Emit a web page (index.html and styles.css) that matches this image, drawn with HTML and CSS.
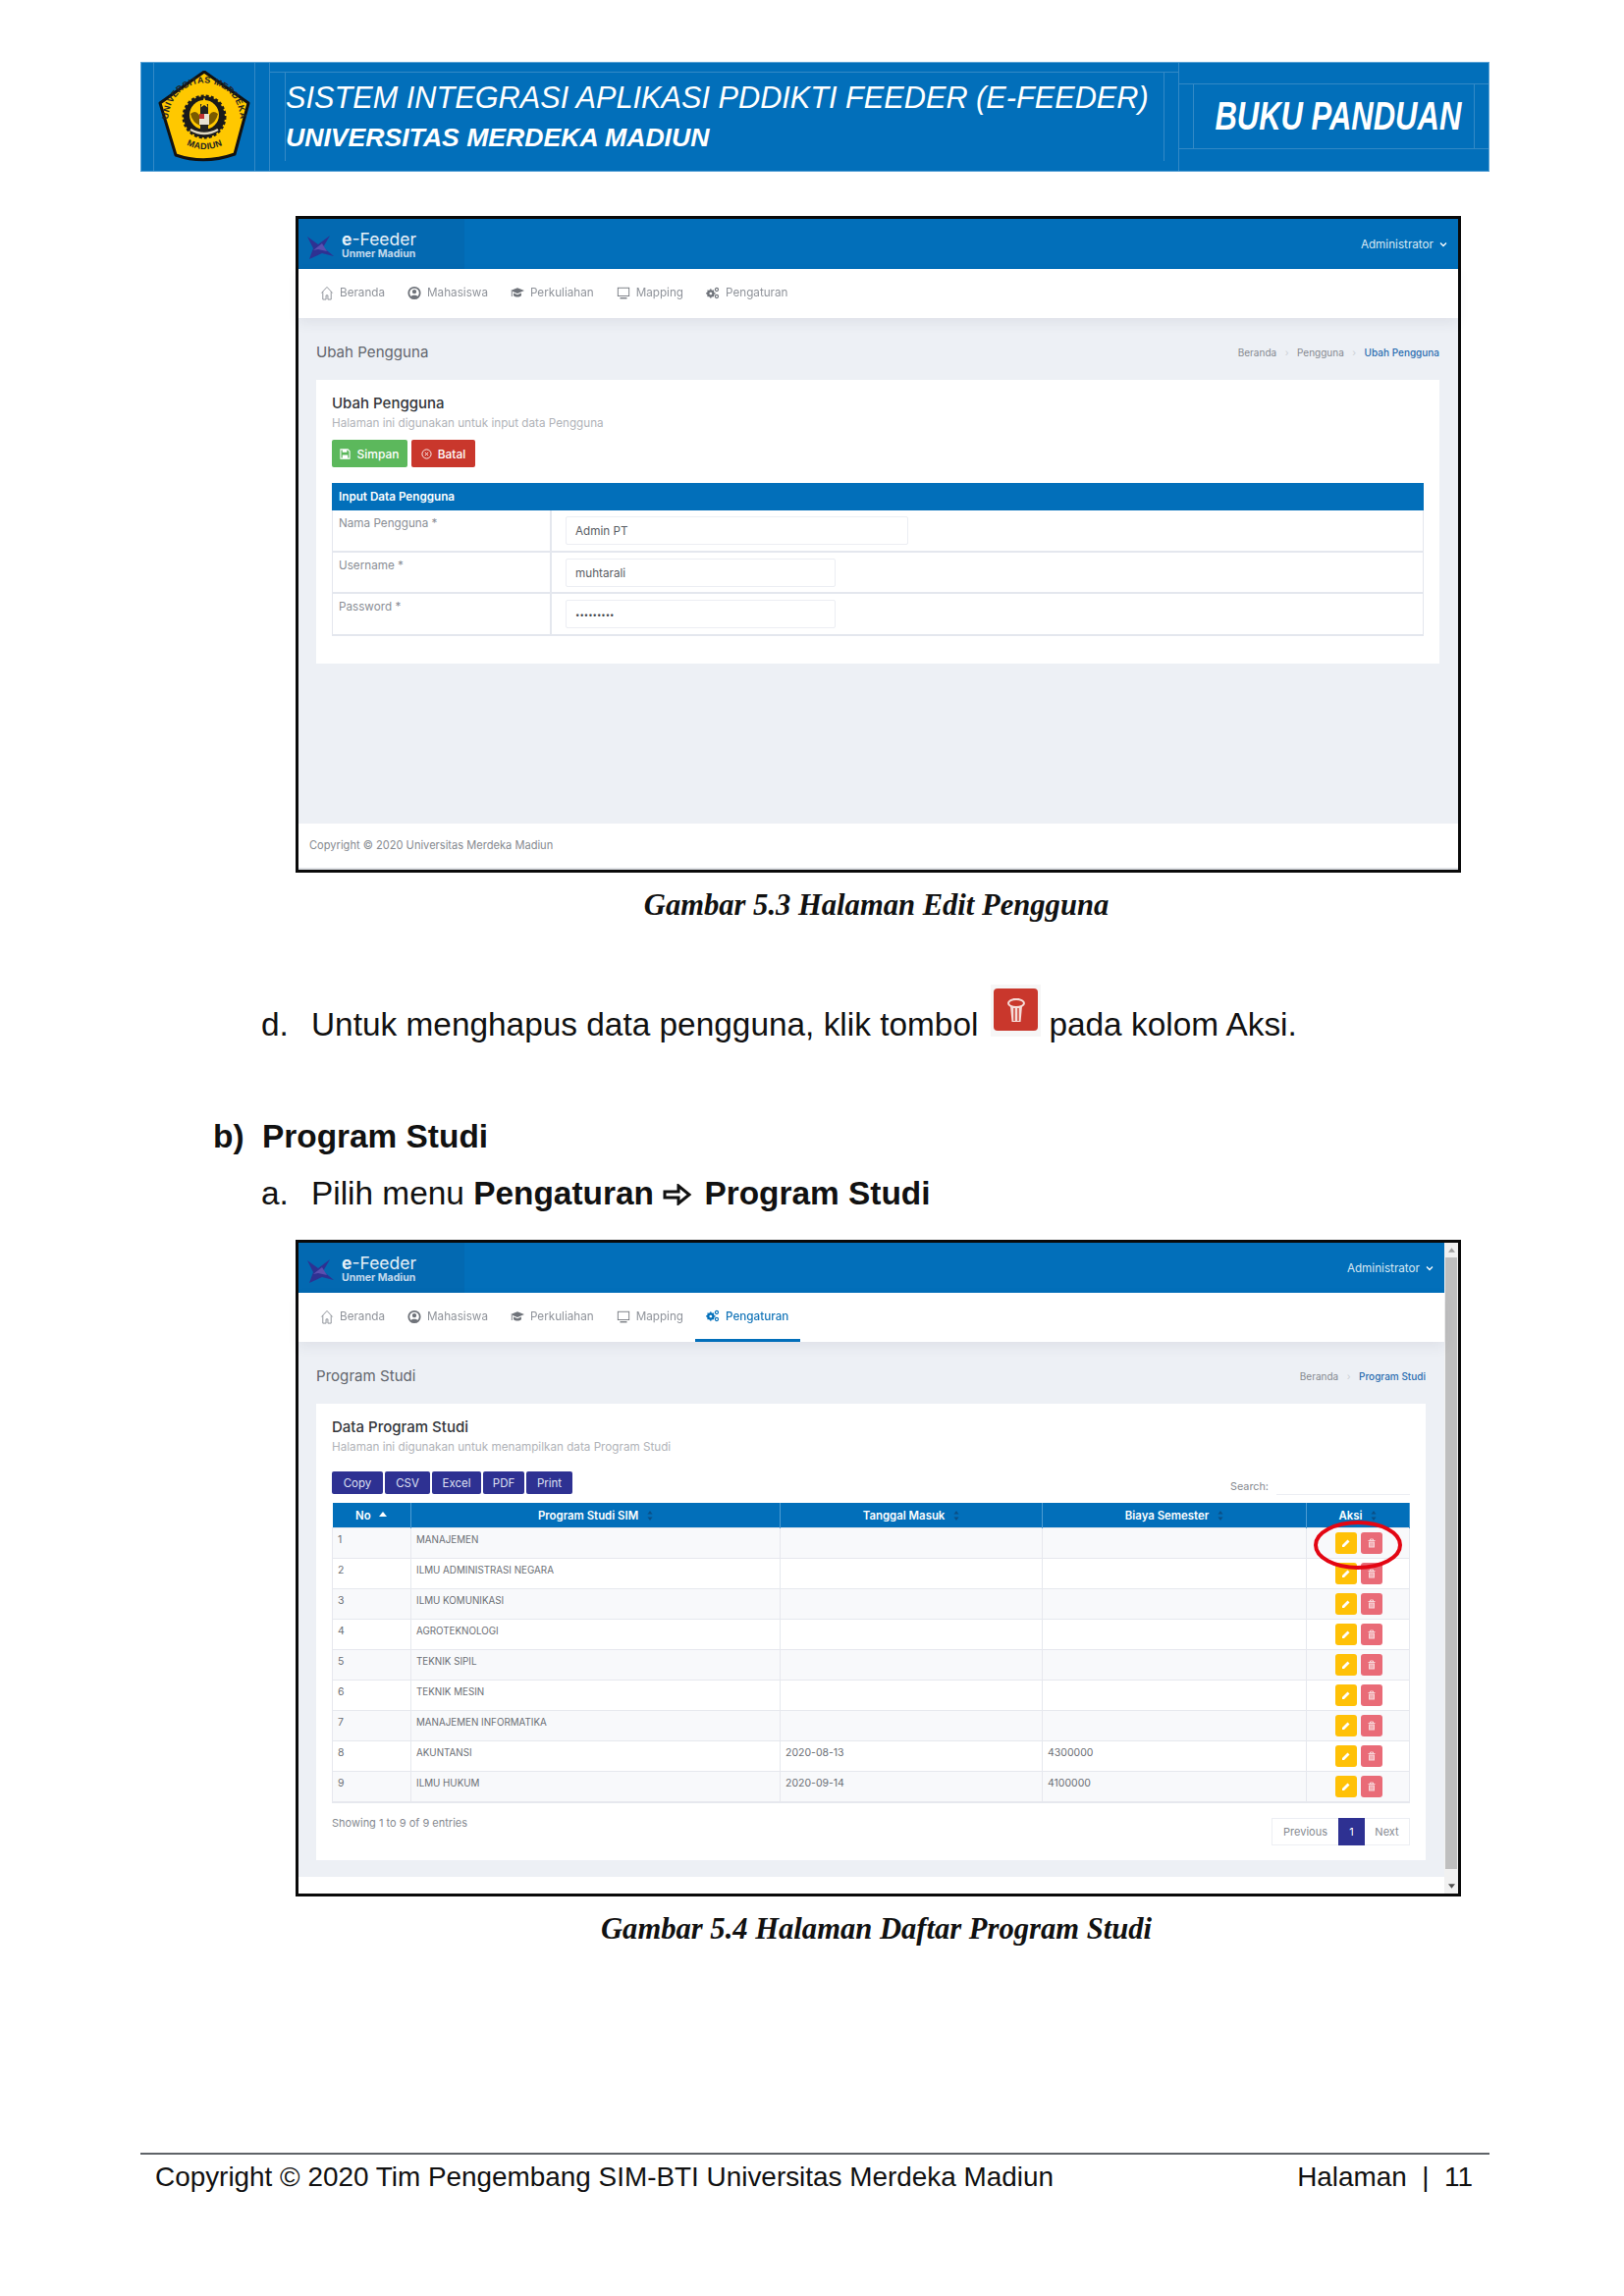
FILE: index.html
```html
<!DOCTYPE html>
<html lang="en">
<head>
    <meta charset="UTF-8">
    <meta name="viewport" content="width=device-width, initial-scale=1.0">
    <title>Buku Panduan E-Feeder</title>
    <link rel="stylesheet" href="styles.css">
</head>
<body>
    <svg class="defs" width="0" height="0">
        <symbol id="i-home" viewBox="0 0 14 16"><path d="M1 8 7 1.5 13 8M2.5 6.5V15H6v-4.5h2V15h3.500V6.500" fill="none" stroke="#8b8f96" stroke-width="1"/></symbol>
        <symbol id="i-user" viewBox="0 0 14 14"><circle cx="7" cy="7" r="5.700" fill="none" stroke="#6f737a" stroke-width="1.800"/><circle cx="7" cy="5.600" r="2.200" fill="#6f737a"/><path d="M3 11c1-2.500 7-2.500 8 0l-4 2z" fill="#6f737a"/></symbol>
        <symbol id="i-cap" viewBox="0 0 16 14"><path d="M8 1 16 4 8 7.500 0 4z" fill="#6f737a"/><path d="M3.500 7v3c2 2 7 2 9 0V7L8 9z" fill="#6f737a"/><path d="M1.500 5v6" stroke="#6f737a" stroke-width="1"/></symbol>
        <symbol id="i-screen" viewBox="0 0 16 14"><rect x="1.500" y="1" width="13" height="9.500" fill="none" stroke="#6f737a" stroke-width="1"/><path d="M4 13h8" stroke="#6f737a" stroke-width="1.500"/></symbol>
        <symbol id="i-gears" viewBox="0 0 16 15"><circle cx="5.500" cy="8" r="3.200" fill="none" stroke="currentColor" stroke-width="2.200"/><path d="M5.500 2.500v11M0 8h11M1.800 4.300l7.400 7.400M9.200 4.300l-7.400 7.400" stroke="currentColor" stroke-width="1.300"/><circle cx="5.500" cy="8" r="1.500" fill="#fff"/><circle cx="12.500" cy="3.500" r="1.800" fill="none" stroke="currentColor" stroke-width="1.300"/><circle cx="12.500" cy="11.500" r="1.800" fill="none" stroke="currentColor" stroke-width="1.300"/></symbol>
        <symbol id="i-save" viewBox="0 0 12 12"><path d="M1 1h8l2 2v8H1z" fill="none" stroke="#fff" stroke-width="1.200"/><path d="M3 1h5v3H3zM3 7h6v4H3z" fill="#fff"/></symbol>
        <symbol id="i-cancel" viewBox="0 0 12 12"><circle cx="6" cy="6" r="5" fill="none" stroke="#fff" stroke-width="1"/><path d="M4.200 4.200l3.600 3.600M7.800 4.200 4.200 7.800" stroke="#fff" stroke-width="1"/></symbol>
        <symbol id="i-pen" viewBox="0 0 10 10"><path d="M1 9V7l5.500-5.500 2 2L3 9z" fill="#fff"/></symbol>
        <symbol id="i-trash" viewBox="0 0 10 10"><path d="M1.500 2.500h7M3.500 2.500V1h3v1.500" fill="none" stroke="#f7d5d8" stroke-width="1"/><path d="M2 3.500h6V9.500H2z" fill="#f7d5d8"/><path d="M4 4.500v4M6 4.500v4" stroke="#e96b77" stroke-width=".7"/></symbol>
        <symbol id="i-bin" viewBox="0 0 20 26"><ellipse cx="10" cy="6" rx="8" ry="4" fill="none" stroke="#f6dcd8" stroke-width="2"/><path d="M7 2h6" stroke="#f6dcd8" stroke-width="2"/><path d="M4 9 5.500 25h9L16 9z" fill="#f6dcd8"/><path d="M8 11v13M12 11v13" stroke="#c9372c" stroke-width="1.400"/></symbol>
        <symbol id="i-chev" viewBox="0 0 8 6"><path d="M1 1.500 4 4.500 7 1.500" fill="none" stroke="#fff" stroke-width="1.300"/></symbol>
        <symbol id="i-sort" viewBox="0 0 6 12"><path d="M3 1 5.500 4.500H.500zM3 11 .500 7.500h5z" fill="#0a4f86"/></symbol>
        <symbol id="i-mark" viewBox="0 0 28 24"><path d="M1 1 12 9 24 0 17 12 28 21 16 18 3 24 7 13z" fill="#2e3192"/><path d="M7 15 16 8 21 16 12 14z" fill="#5a4fb0"/></symbol>
    </svg>

    <div class="page">
        <header class="doc-head">
            <div class="head-edge"></div>
            <div class="head-logo">
                <svg class="logo" viewBox="0 0 94 93">
                    <path d="M47 1 92 33 78 85Q47 96 18 86L2 33z" fill="#ffc800" stroke="#111" stroke-width="3" stroke-linejoin="round"/>
                    <path id="arc-top" d="M11 55A36.500 36.500 0 1 1 83 55" fill="none"/>
                    <path id="arc-bottom" d="M24 73Q47 87 71 73" fill="none"/>
                    <text class="logo-text"><textPath href="#arc-top" startOffset="50%" text-anchor="middle">UNIVERSITAS MERDEKA</textPath></text>
                    <text class="logo-text"><textPath href="#arc-bottom" startOffset="50%" text-anchor="middle">MADIUN</textPath></text>
                    <circle cx="47" cy="47" r="21" fill="#1a1a1a" stroke="#1a1a1a" stroke-width="3" stroke-dasharray="3 2"/>
                    <circle cx="47" cy="45" r="15" fill="#ffc800"/>
                    <path d="M33 44Q40 38 44 50L43 56Q35 53 33 44zM61 44Q54 38 50 50L51 56Q59 53 61 44z" fill="#7a5a00"/>
                    <rect x="43" y="34" width="8" height="28" fill="#222"/>
                    <rect x="42" y="44" width="10" height="11" fill="#e8e2d4"/>
                    <rect x="42" y="44" width="5" height="5" fill="#c03030"/>
                    <path d="M47 27l1.500 4h4l-3 2.500 1 4-3.500-2.500-3.500 2.500 1-4-3-2.500h4z" fill="#ffc800"/>
                    <path d="M33 60Q47 68 61 60" fill="none" stroke="#e0d8c0" stroke-width="2.500"/>
                </svg>
            </div>
            <div class="head-edge head-edge-s"></div>
            <div class="head-main">
                <div class="head-gap"></div>
                <div class="head-titles">
                    <div class="head-title">SISTEM INTEGRASI APLIKASI PDDIKTI FEEDER (E-FEEDER)</div>
                    <div class="head-sub">UNIVERSITAS MERDEKA MADIUN</div>
                </div>
            </div>
            <div class="head-tag">
                <div class="tag-box"><span class="tag-text">BUKU PANDUAN</span></div>
            </div>
        </header>

        <section class="shot">
            <div class="shot-main">
                <div class="app-bar">
                    <div class="app-brand">
                        <svg class="app-mark"><use href="#i-mark"/></svg>
                        <div class="brand-block">
                            <div class="brand-name"><b>e</b>-Feeder</div>
                            <div class="brand-sub">Unmer Madiun</div>
                        </div>
                    </div>
                    <div class="app-user">Administrator <svg class="chev"><use href="#i-chev"/></svg></div>
                </div>
                <nav class="app-nav">
                    <a class="nav-item"><svg class="nav-icon"><use href="#i-home"/></svg>Beranda</a>
                    <a class="nav-item"><svg class="nav-icon"><use href="#i-user"/></svg>Mahasiswa</a>
                    <a class="nav-item"><svg class="nav-icon"><use href="#i-cap"/></svg>Perkuliahan</a>
                    <a class="nav-item"><svg class="nav-icon"><use href="#i-screen"/></svg>Mapping</a>
                    <a class="nav-item"><svg class="nav-icon gears"><use href="#i-gears"/></svg>Pengaturan</a>
                </nav>
                <div class="app-content">
                    <div class="title-row">
                        <div class="page-title">Ubah Pengguna</div>
                        <div class="crumbs"><span>Beranda</span><i>&rsaquo;</i><span>Pengguna</span><i>&rsaquo;</i><span class="crumb-now">Ubah Pengguna</span></div>
                    </div>
                    <div class="card card-form">
                        <div class="card-title">Ubah Pengguna</div>
                        <div class="card-sub">Halaman ini digunakan untuk input data Pengguna</div>
                        <div class="form-btns">
                            <button class="btn btn-green"><svg class="btn-icon"><use href="#i-save"/></svg>Simpan</button>
                            <button class="btn btn-red"><svg class="btn-icon"><use href="#i-cancel"/></svg>Batal</button>
                        </div>
                        <div class="form-head">Input Data Pengguna</div>
                        <div class="form-row">
                            <div class="form-label">Nama Pengguna *</div>
                            <div class="form-field"><div class="fake-input input-wide">Admin PT</div></div>
                        </div>
                        <div class="form-row">
                            <div class="form-label">Username *</div>
                            <div class="form-field"><div class="fake-input">muhtarali</div></div>
                        </div>
                        <div class="form-row">
                            <div class="form-label">Password *</div>
                            <div class="form-field"><div class="fake-input pass">•••••••••</div></div>
                        </div>
                    </div>
                </div>
                <div class="app-foot">Copyright © 2020 Universitas Merdeka Madiun</div>
            </div>
        </section>

        <div class="caption">Gambar 5.3 Halaman Edit Pengguna</div>

        <div class="line line-d">
            <span class="mark">d.</span>
            <span>Untuk menghapus data pengguna, klik tombol</span>
            <span class="del-shot"><span class="del-btn"><svg class="del-icon"><use href="#i-bin"/></svg></span></span>
            <span>pada kolom Aksi.</span>
        </div>

        <div class="line line-b"><span class="mark-b">b)</span><b>Program Studi</b></div>
        <div class="line line-a">
            <span class="mark">a.</span>
            <span>Pilih menu <b>Pengaturan</b> <svg class="arrow" viewBox="0 0 30 22"><path d="M2 8h14V2l11 9-11 9v-6H2z" fill="none" stroke="#111" stroke-width="3"/></svg> <b>Program Studi</b></span>
        </div>

        <section class="shot shot-scroll">
            <div class="shot-main">
                <div class="app-bar">
                    <div class="app-brand">
                        <svg class="app-mark"><use href="#i-mark"/></svg>
                        <div class="brand-block">
                            <div class="brand-name"><b>e</b>-Feeder</div>
                            <div class="brand-sub">Unmer Madiun</div>
                        </div>
                    </div>
                    <div class="app-user">Administrator <svg class="chev"><use href="#i-chev"/></svg></div>
                </div>
                <nav class="app-nav">
                    <a class="nav-item"><svg class="nav-icon"><use href="#i-home"/></svg>Beranda</a>
                    <a class="nav-item"><svg class="nav-icon"><use href="#i-user"/></svg>Mahasiswa</a>
                    <a class="nav-item"><svg class="nav-icon"><use href="#i-cap"/></svg>Perkuliahan</a>
                    <a class="nav-item"><svg class="nav-icon"><use href="#i-screen"/></svg>Mapping</a>
                    <a class="nav-item active"><svg class="nav-icon gears"><use href="#i-gears"/></svg>Pengaturan</a>
                </nav>
                <div class="app-content">
                    <div class="title-row">
                        <div class="page-title">Program Studi</div>
                        <div class="crumbs"><span>Beranda</span><i>&rsaquo;</i><span class="crumb-now">Program Studi</span></div>
                    </div>
                    <div class="card card-list">
                        <div class="card-title">Data Program Studi</div>
                        <div class="card-sub">Halaman ini digunakan untuk menampilkan data Program Studi</div>
                        <div class="dt-tools">
                            <div class="dt-btns">
                                <button class="dt-btn w-copy">Copy</button>
                                <button class="dt-btn w-csv">CSV</button>
                                <button class="dt-btn w-excel">Excel</button>
                                <button class="dt-btn w-pdf">PDF</button>
                                <button class="dt-btn w-print">Print</button>
                            </div>
                            <div class="dt-search">Search:<span class="search-input"></span></div>
                        </div>
                        <table class="dt">
                            <colgroup>
                                <col class="c-no"><col class="c-name"><col class="c-date"><col class="c-fee"><col class="c-act">
                            </colgroup>
                            <thead>
                                <tr>
                                    <th>No <svg class="sort-up" viewBox="0 0 8 5"><path d="M4 0 8 5H0z" fill="#fff"/></svg></th>
                                    <th>Program Studi SIM <svg class="sort"><use href="#i-sort"/></svg></th>
                                    <th>Tanggal Masuk <svg class="sort"><use href="#i-sort"/></svg></th>
                                    <th>Biaya Semester <svg class="sort"><use href="#i-sort"/></svg></th>
                                    <th>Aksi <svg class="sort"><use href="#i-sort"/></svg></th>
                                </tr>
                            </thead>
                            <tbody>
                                <tr><td class="num">1</td><td>MANAJEMEN</td><td></td><td></td><td class="acts"><span class="act act-edit"><svg><use href="#i-pen"/></svg></span><span class="act act-del"><svg><use href="#i-trash"/></svg></span></td></tr>
                                <tr><td class="num">2</td><td>ILMU ADMINISTRASI NEGARA</td><td></td><td></td><td class="acts"><span class="act act-edit"><svg><use href="#i-pen"/></svg></span><span class="act act-del"><svg><use href="#i-trash"/></svg></span></td></tr>
                                <tr><td class="num">3</td><td>ILMU KOMUNIKASI</td><td></td><td></td><td class="acts"><span class="act act-edit"><svg><use href="#i-pen"/></svg></span><span class="act act-del"><svg><use href="#i-trash"/></svg></span></td></tr>
                                <tr><td class="num">4</td><td>AGROTEKNOLOGI</td><td></td><td></td><td class="acts"><span class="act act-edit"><svg><use href="#i-pen"/></svg></span><span class="act act-del"><svg><use href="#i-trash"/></svg></span></td></tr>
                                <tr><td class="num">5</td><td>TEKNIK SIPIL</td><td></td><td></td><td class="acts"><span class="act act-edit"><svg><use href="#i-pen"/></svg></span><span class="act act-del"><svg><use href="#i-trash"/></svg></span></td></tr>
                                <tr><td class="num">6</td><td>TEKNIK MESIN</td><td></td><td></td><td class="acts"><span class="act act-edit"><svg><use href="#i-pen"/></svg></span><span class="act act-del"><svg><use href="#i-trash"/></svg></span></td></tr>
                                <tr><td class="num">7</td><td>MANAJEMEN INFORMATIKA</td><td></td><td></td><td class="acts"><span class="act act-edit"><svg><use href="#i-pen"/></svg></span><span class="act act-del"><svg><use href="#i-trash"/></svg></span></td></tr>
                                <tr><td class="num">8</td><td>AKUNTANSI</td><td class="num">2020-08-13</td><td class="num">4300000</td><td class="acts"><span class="act act-edit"><svg><use href="#i-pen"/></svg></span><span class="act act-del"><svg><use href="#i-trash"/></svg></span></td></tr>
                                <tr><td class="num">9</td><td>ILMU HUKUM</td><td class="num">2020-09-14</td><td class="num">4100000</td><td class="acts"><span class="act act-edit"><svg><use href="#i-pen"/></svg></span><span class="act act-del"><svg><use href="#i-trash"/></svg></span></td></tr>
                            </tbody>
                        </table>
                        <div class="dt-foot">
                            <div class="dt-info">Showing 1 to 9 of 9 entries</div>
                            <div class="pager"><span class="pg pg-prev">Previous</span><span class="pg pg-on">1</span><span class="pg pg-next">Next</span></div>
                        </div>
                        <!-- red circle drawn over the first row buttons -->
                        <svg class="ring" viewBox="0 0 90 50"><ellipse cx="45" cy="25" rx="43" ry="23" fill="none" stroke="#e30613" stroke-width="4"/></svg>
                    </div>
                </div>
                <div class="app-foot app-foot-cut"></div>
            </div>
            <div class="scrollbar">
                <svg class="scroll-arrow" viewBox="0 0 8 5"><path d="M4 0 8 5H0z" fill="#a0a0a0"/></svg>
                <div class="scroll-thumb"></div>
                <svg class="scroll-arrow" viewBox="0 0 8 5"><path d="M4 5 8 0H0z" fill="#505050"/></svg>
            </div>
        </section>

        <div class="caption">Gambar 5.4 Halaman Daftar Program Studi</div>

        <footer class="doc-foot">
            <span>Copyright © 2020 Tim Pengembang SIM-BTI Universitas Merdeka Madiun</span>
            <span>Halaman &nbsp;|&nbsp; 11</span>
        </footer>
    </div>
</body>
</html>
```

FILE: styles.css
```css
body {
    margin: 0;
    background-color: white;
    font-family: "Liberation Sans", Arial, sans-serif;
    color: #111;
}
.defs {
    position: absolute;
}
.page {
    width: 1374px;
    padding: 63px 137px 0 143px;
}

/* blue document header */
.doc-head {
    display: flex;
    height: 112px;
    box-sizing: border-box;
    background-color: #026fba;
    border: 1px solid #5aa3d6;
    color: white;
}
.head-edge {
    flex: none;
    width: 12px;
    border-right: 1px solid #3389c6;
}
.head-edge-s {
    width: 14px;
}
.head-logo {
    flex: none;
    width: 103px;
    border-right: 1px solid #3389c6;
    box-sizing: border-box;
    padding: 8px 0 0 4px;
}
.logo {
    display: block;
    width: 94px;
    height: 93px;
}
.logo-text {
    font-size: 9px;
    font-weight: bold;
    fill: #222;
    letter-spacing: 0.4px;
}
.head-main {
    flex: none;
    display: flex;
    width: 925px;
    height: 100px;
    margin-top: 9px;
    border-top: 1px solid #3389c6;
    box-sizing: border-box;
    padding-right: 14px;
}
.head-gap {
    flex: none;
    width: 15px;
    height: 90px;
    border-right: 1px solid #3389c6;
}
.head-titles {
    flex: 1;
    min-width: 0;
    height: 90px;
    border-right: 1px solid #3389c6;
}
.head-title {
    font-style: italic;
    font-size: 30.700px;
    line-height: 38px;
    margin-top: 7px;
    white-space: nowrap;
}
.head-sub {
    font-style: italic;
    font-weight: bold;
    font-size: 26.600px;
    line-height: 32px;
    margin-top: 5px;
    white-space: nowrap;
}
.head-tag {
    flex: 1;
    min-width: 0;
    padding: 21px 15px 0;
    border-left: 1px solid #3389c6;
}
.tag-box {
    position: relative;
    height: 65px;
    margin: 0 -15px;
    border-top: 1px solid #3389c6;
    border-bottom: 1px solid #3389c6;
    display: flex;
    justify-content: center;
    align-items: center;
}
.tag-box::before,
.tag-box::after {
    content: "";
    position: absolute;
    top: 0;
    bottom: 0;
    width: 1px;
    background-color: #3389c6;
}
.tag-box::before {
    left: 14px;
}
.tag-box::after {
    right: 14px;
}
.tag-text {
    display: inline-block;
    margin-left: 8px;
    font-style: italic;
    font-weight: bold;
    font-size: 40px;
    white-space: nowrap;
    transform: scaleX(0.775);
}

/* app screenshots */
.shot {
    display: flex;
    width: 1187px;
    height: 669px;
    margin-top: 45px;
    margin-left: 158px;
    box-sizing: border-box;
    border: 3px solid #0a0a0a;
    font-family: Inter, "Liberation Sans", sans-serif;
    background-color: white;
}
.shot-scroll {
    margin-top: 27px;
}
.shot-main {
    flex: 1;
    display: flex;
    flex-direction: column;
    min-width: 0;
    filter: blur(0.35px);
}
.app-bar {
    display: flex;
    justify-content: space-between;
    height: 51px;
    background-color: #026fba;
    color: white;
}
.app-brand {
    display: flex;
    width: 169px;
    padding-left: 8px;
    gap: 8px;
    align-items: center;
    box-sizing: border-box;
    background-color: #0369b1;
}
.app-mark {
    width: 28px;
    height: 24px;
    margin-top: 7px;
}
.brand-block {
    padding-top: 2px;
}
.brand-name {
    font-size: 17.500px;
    line-height: 18px;
    color: #e6f0f8;
}
.brand-sub {
    font-size: 10.500px;
    font-weight: 700;
    line-height: 11px;
    color: #c3d9ec;
}
.app-user {
    display: flex;
    align-items: center;
    gap: 6px;
    padding-right: 11px;
    font-size: 11.700px;
    color: #d8e8f4;
}
.chev {
    width: 8px;
    height: 6px;
}
.app-nav {
    position: relative;
    z-index: 1;
    display: flex;
    height: 50px;
    padding-left: 10.500px;
    background-color: white;
    box-shadow: 0 5px 12px rgba(60, 70, 90, 0.08);
}
.nav-item {
    display: flex;
    align-items: center;
    box-sizing: border-box;
    padding: 0 11.500px 2px;
    gap: 6px;
    font-size: 11.700px;
    color: #8f939a;
    white-space: nowrap;
}
.nav-item.active {
    color: #1274b8;
    font-weight: 500;
    border-bottom: 3px solid #026fba;
    padding-top: 1px;
    padding-bottom: 1px;
}
.nav-icon {
    width: 14px;
    height: 15px;
}
.gears {
    color: #6f737a;
}
.active .gears {
    color: #026fba;
}
.app-content {
    flex: 1;
    padding: 0 19px 0 18px;
    background-color: #edf0f5;
}
.title-row {
    display: flex;
    justify-content: space-between;
    align-items: center;
    height: 63px;
    padding-top: 6px;
    box-sizing: border-box;
}
.page-title {
    font-size: 15.100px;
    color: #62666d;
}
.crumbs {
    display: flex;
    gap: 8.500px;
    font-size: 10px;
    color: #858990;
}
.crumbs i {
    font-style: normal;
    color: #ccd0d6;
}
.crumb-now {
    color: #2a6db0;
    font-weight: 500;
}
.card {
    position: relative;
    padding: 14px 16px 0;
    background-color: white;
}
.card-form {
    height: 289px;
    box-sizing: border-box;
}
.card-list {
    height: 465px;
    box-sizing: border-box;
}
.card-title {
    font-size: 15px;
    font-weight: 500;
    line-height: 20px;
    color: #33363b;
}
.card-sub {
    margin-top: 2px;
    font-size: 11.700px;
    line-height: 16px;
    color: #b0b3b8;
}
.form-btns {
    display: flex;
    gap: 4px;
    margin-top: 9px;
}
.btn {
    display: flex;
    align-items: center;
    justify-content: center;
    gap: 6px;
    height: 28px;
    padding: 0;
    border: none;
    border-radius: 2px;
    color: white;
    font-family: inherit;
    font-size: 12px;
    font-weight: 500;
}
.btn-icon {
    width: 11px;
    height: 11px;
}
.btn-green {
    width: 77px;
    background-color: #5cb85c;
}
.btn-red {
    width: 65px;
    background-color: #c9372c;
}
.form-head {
    height: 28px;
    margin-top: 16px;
    padding-left: 7px;
    line-height: 28px;
    background-color: #026fba;
    color: white;
    font-size: 11.700px;
    font-weight: 600;
}
.form-row {
    display: flex;
    height: 42.500px;
    box-sizing: border-box;
    border: 1px solid #e4e7ee;
    border-top: none;
    border-bottom-width: 2px;
    font-size: 11.700px;
}
.form-label {
    width: 223px;
    box-sizing: border-box;
    padding: 6px 0 0 6px;
    border-right: 2px solid #e4e7ee;
    color: #8a8e95;
}
.form-field {
    padding: 6px 0 0 14px;
}
.fake-input {
    width: 275px;
    height: 29px;
    box-sizing: border-box;
    padding-left: 9px;
    line-height: 28px;
    border: 1px solid #eceef3;
    border-radius: 2px;
    color: #595d64;
}
.input-wide {
    width: 349px;
}
.pass {
    font-size: 7.800px;
    color: #44474d;
}
.app-foot {
    height: 47px;
    box-sizing: border-box;
    padding: 15px 0 0 11px;
    border-bottom: 2px solid #dfe1e5;
    background-color: white;
    font-size: 11.100px;
    color: #85898f;
}
.app-foot-cut {
    height: 17px;
    padding: 0;
    border-bottom: none;
}

/* data table card */
.dt-tools {
    display: flex;
    justify-content: space-between;
    margin-top: 17px;
    height: 32px;
}
.dt-btns {
    display: flex;
    gap: 2px;
    height: 23px;
}
.dt-btn {
    padding: 0;
    border: none;
    border-radius: 2px;
    background-color: #2e3192;
    color: #dfe0f2;
    font-family: inherit;
    font-size: 11.500px;
}
.w-copy { width: 52px; }
.w-csv { width: 46px; }
.w-excel { width: 50px; }
.w-pdf { width: 42px; }
.w-print { width: 47px; }
.dt-search {
    display: flex;
    gap: 8px;
    height: 24px;
    padding-top: 9px;
    box-sizing: border-box;
    font-size: 10.800px;
    color: #85898f;
}
.search-input {
    width: 136px;
    border-bottom: 1px solid #eceef3;
}
.dt {
    width: 1097px;
    border-collapse: collapse;
    table-layout: fixed;
    font-size: 9.800px;
    color: #6a6e74;
}
.c-no { width: 80px; }
.c-name { width: 376px; }
.c-date { width: 267px; }
.c-fee { width: 269px; }
.c-act { width: 105px; }
.dt th {
    height: 25px;
    padding: 0;
    background-color: #026fba;
    border-right: 1px solid #4d9bd2;
    color: white;
    font-size: 11.400px;
    font-weight: 600;
}
.dt td {
    height: 31px;
    padding: 5px 0 0 5px;
    box-sizing: border-box;
    vertical-align: top;
    border: 1px solid #e6e8ee;
    line-height: 13px;
}
.dt td.num {
    font-size: 10.500px;
}
.dt tbody tr:nth-child(odd) {
    background-color: #f8f9fb;
}
.dt tbody tr:last-child td {
    border-bottom-width: 2px;
}
.sort {
    width: 6px;
    height: 12px;
    margin-left: 6px;
    vertical-align: middle;
}
.sort-up {
    width: 8px;
    height: 5px;
    margin-left: 6px;
    vertical-align: 3px;
}
.dt td.acts {
    padding: 4px 0 0 29px;
}
.act {
    float: left;
    display: flex;
    align-items: center;
    justify-content: center;
    width: 22px;
    height: 22px;
    border-radius: 3px;
    margin-right: 4px;
}
.act svg {
    width: 10px;
    height: 10px;
}
.act-edit {
    background-color: #ffc107;
}
.act-del {
    background-color: #e96b77;
}
.dt-foot {
    display: flex;
    justify-content: space-between;
    margin-top: 15px;
}
.dt-info {
    margin-top: -2px;
    font-size: 11px;
    line-height: 14px;
    color: #85898f;
}
.pager {
    display: flex;
    height: 28px;
    font-size: 11px;
    line-height: 26px;
    color: #85898f;
}
.pg {
    box-sizing: border-box;
    text-align: center;
    border: 1px solid #eceef3;
}
.pg-prev {
    width: 68px;
    border-right: none;
}
.pg-on {
    width: 27px;
    background-color: #2e3192;
    border-color: #2e3192;
    color: white;
}
.pg-next {
    width: 46px;
    border-left: none;
}
.ring {
    position: absolute;
    left: 1016px;
    top: 119px;
    width: 90px;
    height: 50px;
}
.scrollbar {
    display: flex;
    flex-direction: column;
    align-items: center;
    width: 14px;
    background-color: #f1f1f1;
}
.scroll-arrow {
    width: 7px;
    height: 5px;
    margin: 5px 0;
}
.scroll-thumb {
    flex: 1;
    width: 12px;
    margin: 0 0 10px;
    background-color: #bfbfbf;
}

/* document text */
.caption {
    margin-top: 13px;
    text-align: center;
    padding-left: 125px;
    font-family: "Liberation Serif", "Times New Roman", serif;
    font-style: italic;
    font-weight: bold;
    font-size: 30.600px;
    line-height: 40px;
}
.line {
    display: flex;
    font-size: 33.400px;
    line-height: 40px;
    white-space: nowrap;
}
.mark {
    width: 51px;
    margin-left: 123px;
}
.mark-b {
    width: 50px;
    margin-left: 74px;
    font-weight: bold;
}
.line-d {
    align-items: flex-end;
    margin-top: 61px;
}
.line-b {
    margin-top: 74px;
    font-weight: bold;
}
.line-a {
    margin-top: 18px;
}
.del-shot {
    display: flex;
    justify-content: center;
    align-items: flex-start;
    box-sizing: border-box;
    width: 51px;
    height: 53px;
    padding-top: 4px;
    margin: 0 8px 8px 13px;
    background-color: #f6f6f6;
}
.del-btn {
    display: flex;
    align-items: center;
    justify-content: center;
    width: 45px;
    height: 43px;
    border-radius: 4px;
    background-color: #c9372c;
}
.del-icon {
    width: 20px;
    height: 26px;
}
.arrow {
    width: 30px;
    height: 22px;
    margin: 0 3px 0 0;
    vertical-align: -1px;
}
.doc-foot {
    display: flex;
    justify-content: space-between;
    margin-top: 208px;
    padding: 3px 17px 0 15px;
    border-top: 2px solid #5f6368;
    font-size: 27.900px;
    line-height: 40px;
}
```
